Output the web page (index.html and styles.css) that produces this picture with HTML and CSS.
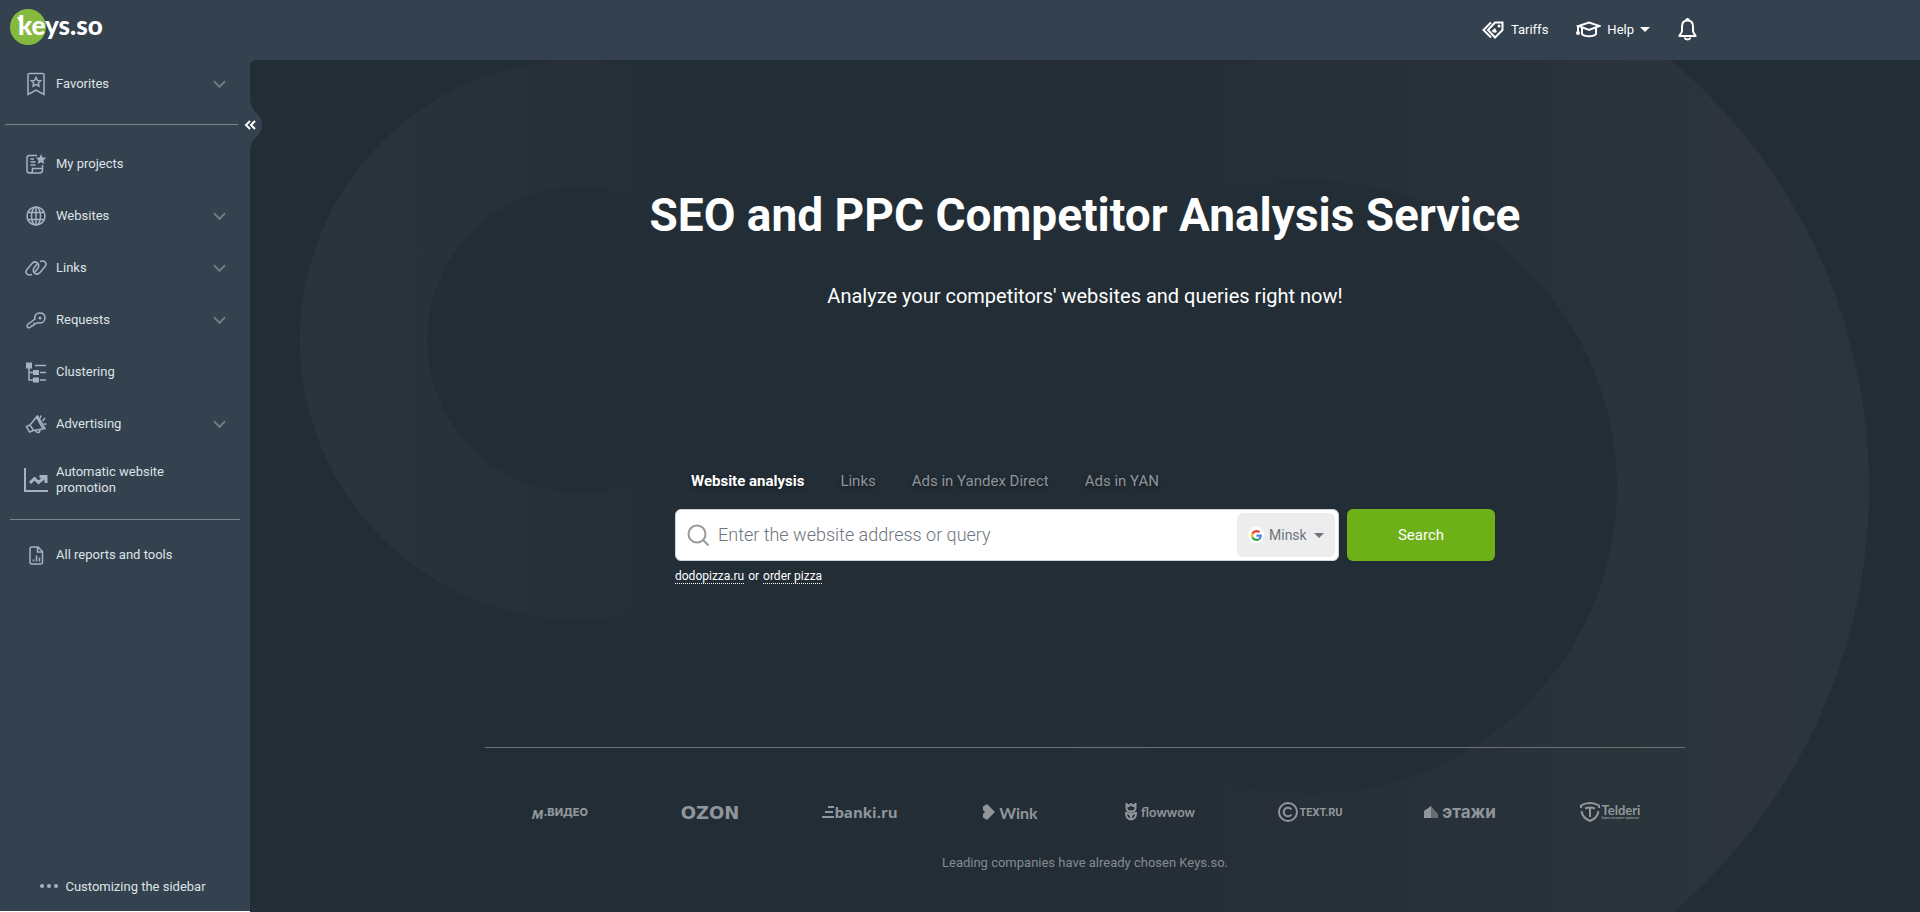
FILE: index.html
```html
<!DOCTYPE html>
<html lang="en">
<head>
    <meta charset="UTF-8">
    <meta name="viewport" content="width=device-width, initial-scale=1.0">
    <title>Keys.so</title>
    <link rel="stylesheet" href="styles.css">
</head>
<body>
    <header class="header">
        <a class="logo" href="#" aria-label="keys.so">
            <svg width="100" height="40" viewBox="0 0 100 40">
                <circle cx="18" cy="19" r="18" fill="#85b940"/>
                <path d="M7 9h6v4H9z" fill="#fff"/>
                <text class="logo-text" x="8" y="27">keys.so</text>
            </svg>
        </a>
        <div class="header-main">
            <nav class="header-nav">
                <a class="header-link" href="#">
                    <svg width="22" height="18" viewBox="0 0 22 18">
                        <path d="M13 1.500h7.500V9L13 16.500 6 9z"/>
                        <path d="M9 1.500 1.500 9 9 16.500"/>
                        <path class="solid" d="m9.500 10 3.500-3 2 4-2.500 1z"/>
                        <circle class="solid" cx="17" cy="5" r="1.500"/>
                    </svg>
                    Tariffs
                </a>
                <button class="header-link header-help" type="button">
                    <svg width="25" height="17" viewBox="0 0 25 17">
                        <path d="M13 1.500 23.500 5 13 9 2.500 5z"/>
                        <path d="M6 7v6c2 3 12 3 14 0V7M2 5v6"/>
                        <circle cx="2" cy="12" r="1"/>
                    </svg>
                    Help
                    <span class="caret"></span>
                </button>
                <button class="header-link" type="button" aria-label="Notifications">
                    <svg width="19" height="23" viewBox="0 0 19 23">
                        <path d="M9.500 2.500c-4 0-5.500 3-5.500 6v4.500c0 2-2.500 3.500-2.500 5h16c0-1.500-2.500-3-2.500-5V8.500c0-3-1.500-6-5.500-6z"/>
                        <path d="M8 2c.5-1.300 2.500-1.300 3 0M6.500 19.500c.8 2.500 5.200 2.500 6 0"/>
                    </svg>
                </button>
            </nav>
        </div>
    </header>

    <div class="page">
        <aside class="sidebar">
            <button class="menu-item menu-favorites" type="button">
                <svg class="menu-icon" viewBox="0 0 20 20">
                    <path d="M2 20.500V1Q2-.5 3.500-.5h13Q18-.5 18 1v19.500L10 16z"/>
                    <path d="m10 3.500 1.400 2.900 3.200.4-2.300 2.200.6 3.200-2.900-1.500-2.900 1.500.6-3.200-2.300-2.200 3.200-.4z"/>
                </svg>
                <span class="menu-label">Favorites</span>
                <svg class="chevron" viewBox="0 0 14 8"><path d="m1 1 6 6 6-6"/></svg>
            </button>
            <hr class="divider divider-top">
            <nav class="menu">
                <a class="menu-item" href="#">
                    <svg class="menu-icon" viewBox="0 0 20 20">
                        <path d="M11 1.500H3.500Q1 1.500 1 4v12.500Q1 19 3.500 19h10q3 0 3-3v-1.500h-10V16.500Q6.500 19 4 19M16.500 11v4"/>
                        <path d="M4.500 5H8M4.500 8H9.500M4.500 11h5"/>
                        <path class="solid" d="m15 0 1.500 3.400 3.700.4-2.700 2.500.7 3.700-3.200-1.800L11.700 10l.8-3.700L9.800 3.800l3.700-.4z"/>
                    </svg>
                    <span class="menu-label">My projects</span>
                </a>
                <button class="menu-item" type="button">
                    <svg class="menu-icon" viewBox="0 0 20 20">
                        <circle cx="10" cy="10" r="9"/>
                        <ellipse cx="10" cy="10" rx="4.500" ry="9"/>
                        <path d="M10 1v18M2 6.500h16M2 13.500h16"/>
                    </svg>
                    <span class="menu-label">Websites</span>
                    <svg class="chevron" viewBox="0 0 14 8"><path d="m1 1 6 6 6-6"/></svg>
                </button>
                <button class="menu-item" type="button">
                    <svg class="menu-icon" viewBox="0 0 20 20">
                        <path d="M6 16.500c-5 1.500-7.500-2-5-5l4.500-5.500c3.500-4.500 9.500-.5 6.500 4l-3.500 4.500M14 3.500c5-1.500 7.500 2 5 5L14.500 14c-3.500 4.500-9.500.5-6.500-4l3.500-4.500"/>
                    </svg>
                    <span class="menu-label">Links</span>
                    <svg class="chevron" viewBox="0 0 14 8"><path d="m1 1 6 6 6-6"/></svg>
                </button>
                <button class="menu-item" type="button">
                    <svg class="menu-icon" viewBox="0 0 20 20">
                        <path d="M9 9C8 5.500 10.500 3 13.500 3c3.500 0 5.500 2 5.500 5s-2.500 5-5.500 5l-2-.5-2 1.500-1.500-.5-.5 2-1.700.2-1.300 1.300q-1.500 1.500-3 .3-1.200-1.500.3-3z"/>
                        <circle class="solid" cx="14" cy="8" r="1.500"/>
                    </svg>
                    <span class="menu-label">Requests</span>
                    <svg class="chevron" viewBox="0 0 14 8"><path d="m1 1 6 6 6-6"/></svg>
                </button>
                <a class="menu-item" href="#">
                    <svg class="menu-icon" viewBox="0 0 20 20">
                        <path d="M3 4v14h5M3 10.500h5M9 3.500h11M14 10.500h6M14 18h6"/>
                        <path class="solid" d="M0 .5h6v6H0zM7 8h6v5H7zM7 15.500h6v5H7z"/>
                    </svg>
                    <span class="menu-label">Clustering</span>
                </a>
                <button class="menu-item" type="button">
                    <svg class="menu-icon" viewBox="0 0 20 20">
                        <path d="M10.500 3 4 11l3.500 5.500 9.500-1.500zM4 11l-3.500 1.500L3.500 18l4-1.500M9.500 16.500q1.500 3 4 1.500l.5-2M10.500 3l1-1 7.500 12.500-2 .5"/>
                        <path d="m14 4.500 1-3M16.500 7l2.500-3M17.500 10h3"/>
                    </svg>
                    <span class="menu-label">Advertising</span>
                    <svg class="chevron" viewBox="0 0 14 8"><path d="m1 1 6 6 6-6"/></svg>
                </button>
                <a class="menu-item menu-item-tall" href="#">
                    <svg class="menu-icon menu-icon-big" viewBox="0 0 24 24">
                        <path d="M1 0v23h23"/>
                        <path class="bold" d="m6 15 4.500-4.500 4 4L21 9M15.500 8.500H22V15"/>
                    </svg>
                    <span class="menu-label">Automatic website promotion</span>
                </a>
            </nav>
            <hr class="divider">
            <a class="menu-item" href="#">
                <svg class="menu-icon" viewBox="0 0 20 20">
                    <path d="M12 2H6Q4 2 4 4v13q0 2 2 2h8.500q2 0 2-2V6.500zM11.500 2v5h5M7.500 16.500v-2M10.500 16.500v-6M13.500 16.500v-4"/>
                </svg>
                <span class="menu-label">All reports and tools</span>
            </a>
            <button class="customize" type="button">
                <span class="dots"><i></i><i></i><i></i></span>
                Customizing the sidebar
            </button>
        </aside>

        <main class="main">
            <svg class="rings" aria-hidden="true">
                <defs>
                    <linearGradient id="ringLeft">
                        <stop offset="0" stop-color="#2a343b"/>
                        <stop offset="0.25" stop-color="#29323b"/>
                        <stop offset="0.75" stop-color="#232d35"/>
                    </linearGradient>
                    <linearGradient id="ringRight">
                        <stop offset="0.2" stop-color="#232d35"/>
                        <stop offset="0.55" stop-color="#272f38"/>
                        <stop offset="0.8" stop-color="#2a343b"/>
                        <stop offset="0.9" stop-color="#2d343e"/>
                        <stop offset="1" stop-color="#2b353d"/>
                    </linearGradient>
                </defs>
                <path fill="url(#ringRight)" fill-rule="evenodd" d="M501 427a559 559 0 1 0 1118 0a559 559 0 1 0-1118 0zM753 427a307 307 0 1 0 614 0a307 307 0 1 0-614 0z"/>
                <path fill="url(#ringLeft)" fill-rule="evenodd" d="M50 280a280 280 0 1 0 560 0a280 280 0 1 0-560 0zM177 280a153 153 0 1 0 306 0a153 153 0 1 0-306 0z"/>
            </svg>
            <button class="collapse" type="button" aria-label="Collapse sidebar">
                <svg width="20" height="56" viewBox="0 0 20 56">
                    <path d="M8 0c0 18 12 14 12 28S8 38 8 56z" fill="#34414e"/>
                    <path d="m8 24-4 4 4 4M13 24l-4 4 4 4" fill="none" stroke="#fff" stroke-width="2"/>
                </svg>
            </button>

            <h1 class="title">SEO and PPC Competitor Analysis Service</h1>
            <p class="subtitle">Analyze your competitors' websites and queries right now!</p>

            <form class="search">
                <div class="tabs">
                    <button class="tab active" type="button">Website analysis</button>
                    <button class="tab" type="button">Links</button>
                    <button class="tab" type="button">Ads in Yandex Direct</button>
                    <button class="tab" type="button">Ads in YAN</button>
                </div>
                <div class="search-row">
                    <div class="search-box">
                        <svg class="search-icon" width="22" height="22" viewBox="0 0 22 22">
                            <circle cx="10" cy="10" r="8.500"/>
                            <path d="m16 16 5.500 5.500"/>
                        </svg>
                        <input class="search-input" type="text" aria-label="Website address or query" placeholder="Enter the website address or query">
                        <div class="region">
                            <span class="google">
                                <svg width="11" height="11" viewBox="0 0 48 48">
                                    <path fill="#ea4335" d="M24 9.500c3.540 0 6.710 1.220 9.210 3.600l6.850-6.850C35.900 2.380 30.470 0 24 0 14.620 0 6.510 5.380 2.560 13.220l7.980 6.190C12.430 13.720 17.740 9.500 24 9.500z"/>
                                    <path fill="#4285f4" d="M46.980 24.550c0-1.570-.15-3.090-.38-4.550H24v9.020h12.940c-.58 2.960-2.260 5.480-4.780 7.180l7.730 6c4.510-4.180 7.090-10.360 7.090-17.650z"/>
                                    <path fill="#fbbc05" d="M10.530 28.590a14.500 14.500 0 0 1 0-9.180l-7.980-6.190a24 24 0 0 0 0 21.560z"/>
                                    <path fill="#34a853" d="M24 48c6.480 0 11.930-2.130 15.890-5.810l-7.730-6c-2.150 1.450-4.920 2.300-8.160 2.300-6.260 0-11.570-4.220-13.470-9.910l-7.980 6.190C6.510 42.620 14.620 48 24 48z"/>
                                </svg>
                            </span>
                            <select class="region-select" aria-label="Region">
                                <option>Minsk</option>
                            </select>
                            <span class="caret"></span>
                        </div>
                    </div>
                    <button class="search-button" type="submit">Search</button>
                </div>
                <p class="hint"><a href="#">dodopizza.ru</a> <span>or</span> <a href="#">order pizza</a></p>
            </form>

            <section class="clients">
                <ul class="client-list">
                    <li class="client client-mvideo"><span class="client-m">м</span>.ВИДЕО</li>
                    <li class="client client-ozon">OZON</li>
                    <li class="client client-banki">
                        <svg width="12" height="12" viewBox="0 0 12 12"><path d="M6 0h6v2H6zM3 5h8v2H3zM0 10h12v2H0z"/></svg>
                        banki.ru
                    </li>
                    <li class="client client-wink">
                        <svg width="13" height="16" viewBox="0 0 13 16"><path d="M1 2.500 5 0l8 8-8 8-4-2.500V10l2-2-2-2z"/></svg>
                        Wink
                    </li>
                    <li class="client client-flowwow">
                        <svg class="line" width="12" height="18" viewBox="0 0 12 18">
                            <path d="M1.500 1v4q0 3.500 4.500 3.500t4.500-3.500V1L8 3 6 1 4 3zM6 8v9M6 16.500Q1 16 1 10q4 0 5 4 1-4 5-4 0 6-5 6.500"/>
                        </svg>
                        flowwow
                    </li>
                    <li class="client client-text">
                        <svg class="line" width="20" height="20" viewBox="0 0 20 20">
                            <circle cx="10" cy="10" r="9"/>
                            <path d="M13.500 7.500a4.300 4.300 0 1 0 0 5"/>
                        </svg>
                        TEXT.RU
                    </li>
                    <li class="client client-etagi">
                        <svg width="14" height="12" viewBox="0 0 14 12">
                            <path d="M0 5 7 0v12H0z"/>
                            <path d="m7 0 7 8v4H7z" opacity=".6"/>
                        </svg>
                        этажи
                    </li>
                    <li class="client client-telderi">
                        <svg class="line" width="20" height="20" viewBox="0 0 20 20">
                            <path d="M1 6V3.500Q10-1.500 19 3.500V6M1.500 9q1 7 8.500 10 7.500-3 8.500-10"/>
                            <path d="M5 6.500q5-2 10 0M10 6v9"/>
                        </svg>
                        <span class="telderi-name">Telderi<small>биржа интернет-проектов</small></span>
                    </li>
                </ul>
                <p class="clients-note">Leading companies have already chosen Keys.so.</p>
            </section>
        </main>
    </div>
</body>
</html>
```

FILE: styles.css
```css
* {
    box-sizing: border-box;
}
body {
    font-family: Roboto, "Liberation Sans", sans-serif;
    font-size: 13px;
    background-color: #fff;
    color: #fff;
    display: flex;
    flex-direction: column;
    min-height: 100vh;
    margin: 0;
}
button, input, select {
    font-family: inherit;
    font-size: inherit;
    color: inherit;
    border: none;
    background: none;
    padding: 0;
    margin: 0;
}
button {
    cursor: pointer;
}
a {
    color: inherit;
    text-decoration: none;
}

/* header */
.header {
    display: flex;
    height: 60px;
    background-color: #34414e;
}
.logo {
    width: 250px;
    padding: 8px 10px;
    flex-shrink: 0;
}
.logo-text {
    font-family: Lato, sans-serif;
    font-size: 26px;
    font-weight: 900;
    fill: #fff;
}
.header-main {
    flex: 1;
}
.header-nav {
    display: flex;
    justify-content: flex-end;
    align-items: center;
    gap: 28px;
    max-width: 1224px;
    height: 59px;
    margin: 0 auto;
}
.header-link {
    display: flex;
    align-items: center;
    gap: 7px;
    font-weight: 400;
}
.header-link svg {
    fill: none;
    stroke: #fff;
    stroke-width: 2;
}
.header-link .solid {
    fill: #fff;
    stroke: none;
}
.header-help {
    gap: 6px;
}
.caret {
    border: 5px solid transparent;
    border-top-color: currentColor;
    border-bottom: none;
}

/* sidebar */
.page {
    display: flex;
    flex: 1;
    background: linear-gradient(#34414e, #34414e) no-repeat 0 0 / 260px 20px;
}
.sidebar {
    display: flex;
    flex-direction: column;
    width: 250px;
    flex-shrink: 0;
    margin-bottom: 1px;
    background-color: #34414e;
    color: #dee3e7;
}
.menu-item {
    display: flex;
    align-items: center;
    gap: 10px;
    width: 100%;
    height: 52px;
    padding: 0 24px 0 26px;
    text-align: left;
    line-height: 16px;
}
.menu-favorites {
    height: 48px;
}
.menu-item-tall {
    gap: 8px;
    height: 60px;
    padding-left: 24px;
}
.menu-icon {
    width: 20px;
    height: 20px;
    flex-shrink: 0;
    overflow: visible;
    fill: none;
    stroke: #a5b3c1;
    stroke-width: 1.5;
}
.menu-icon-big {
    width: 24px;
    height: 24px;
    stroke-width: 2;
}
.menu-icon .solid {
    fill: #a5b3c1;
    stroke: none;
}
.menu-icon .bold {
    stroke-width: 3;
}
.menu-label {
    width: 130px;
}
.chevron {
    width: 13px;
    height: 8px;
    margin-left: auto;
    fill: none;
    stroke: #74808a;
    stroke-width: 2;
}
.divider {
    width: 230px;
    height: 1px;
    margin: 9px 10px;
    border: none;
    background-color: #78848d;
}
.divider-top {
    width: 233px;
    margin: 16px 5px 13px;
}
.customize {
    display: flex;
    align-items: center;
    justify-content: center;
    gap: 7px;
    margin-top: auto;
    height: 50px;
    padding-right: 4px;
}
.dots {
    display: flex;
    gap: 3px;
}
.dots i {
    width: 4px;
    height: 4px;
    border-radius: 50%;
    background-color: #a5b3c1;
}

/* main */
.main {
    position: relative;
    z-index: 0;
    flex: 1;
    min-width: 0;
    padding: 127px 20px 36px;
    border-radius: 6px 0 0 0;
    background-color: #232d35;
}
.rings {
    position: absolute;
    z-index: -1;
    top: 0;
    left: 0;
    width: 100%;
    height: 100%;
}
.collapse {
    position: absolute;
    top: 37px;
    left: -8px;
    height: 56px;
}
.title {
    margin: 0;
    font-size: 46px;
    line-height: 56px;
    font-weight: 700;
    text-align: center;
}
.subtitle {
    margin: 41px 0 0;
    font-size: 20px;
    line-height: 24px;
    text-align: center;
}
.search {
    max-width: 820px;
    margin: 161px auto 0;
}
.tabs {
    display: flex;
    gap: 36px;
    padding-left: 16px;
}
.tab {
    font-size: 15px;
    line-height: 24px;
    color: #8e9499;
    text-shadow: 0 2px 4px rgba(0, 0, 0, 0.4);
}
.tab.active {
    font-weight: 700;
    color: #fff;
}
.search-row {
    display: flex;
    gap: 8px;
    margin-top: 16px;
}
.search-box {
    display: flex;
    align-items: center;
    flex: 1;
    height: 52px;
    padding: 0 3px 0 11px;
    border: 1px solid #ced4da;
    border-radius: 6px;
    background-color: #fff;
}
.search-icon {
    flex-shrink: 0;
    fill: none;
    stroke: #999;
    stroke-width: 2;
}
.search-input {
    flex: 1;
    min-width: 0;
    padding: 0 9px 2px;
    font-size: 18px;
    font-weight: 300;
    color: #495057;
    outline: none;
}
.search-input::placeholder {
    color: #6c757d;
    opacity: 1;
}
.region {
    display: flex;
    align-items: center;
    gap: 5px;
    width: 98px;
    height: 44px;
    padding: 0 11px;
    border-radius: 6px;
    background-color: #ededed;
    color: #6c757d;
}
.google {
    display: flex;
    align-items: center;
    justify-content: center;
    width: 16px;
    height: 16px;
    border-radius: 50%;
    background-color: #fff;
}
.region-select {
    flex: 1;
    appearance: none;
    font-size: 14px;
}
.search-button {
    width: 148px;
    border-radius: 6px;
    background-color: #6eb017;
    font-size: 15px;
    font-weight: 400;
}
.hint {
    margin: 6px 0 0;
    font-size: 12px;
    line-height: 18px;
}
.hint span {
    margin: 0 1px;
}
.hint a {
    border-bottom: 1px dotted #fff;
}

/* clients */
.clients {
    max-width: 1200px;
    margin: 162px auto 0;
    border-top: 1px solid #6b7275;
}
.client-list {
    display: grid;
    grid-template-columns: repeat(8, 1fr);
    margin: 44px 0 21px;
    padding: 0;
    list-style: none;
}
.client {
    display: flex;
    align-items: center;
    justify-content: center;
    height: 40px;
    gap: 4px;
    font-weight: 700;
    color: #90969a;
}
.client svg {
    fill: currentColor;
    flex-shrink: 0;
}
.client svg.line {
    fill: none;
    stroke: currentColor;
    stroke-width: 2;
}
.client-mvideo {
    gap: 0;
    font-family: Inter, sans-serif;
    font-size: 11px;
    font-weight: 800;
}
.client-m {
    font-family: Lato, sans-serif;
    font-size: 16px;
    font-weight: 900;
    font-style: italic;
}
.client-ozon {
    font-family: "DejaVu Sans", sans-serif;
    font-size: 18px;
}
.client-banki {
    gap: 0;
    font-family: "Open Sans", sans-serif;
    font-size: 15px;
}
.client-wink {
    font-family: Lato, sans-serif;
    font-size: 16px;
}
.client-flowwow {
    font-family: Lato, sans-serif;
    font-size: 13px;
}
.client-text {
    gap: 2px;
    font-size: 11px;
}
.client-etagi {
    font-family: Inter, sans-serif;
    font-size: 17px;
}
.client-telderi {
    gap: 2px;
    font-family: Lato, sans-serif;
    font-size: 13px;
}
.telderi-name {
    display: flex;
    flex-direction: column;
    line-height: 12px;
}
.telderi-name small {
    font-size: 3px;
    line-height: 4px;
}
.clients-note {
    margin: 0;
    line-height: 20px;
    text-align: center;
    color: #848b90;
}
```
